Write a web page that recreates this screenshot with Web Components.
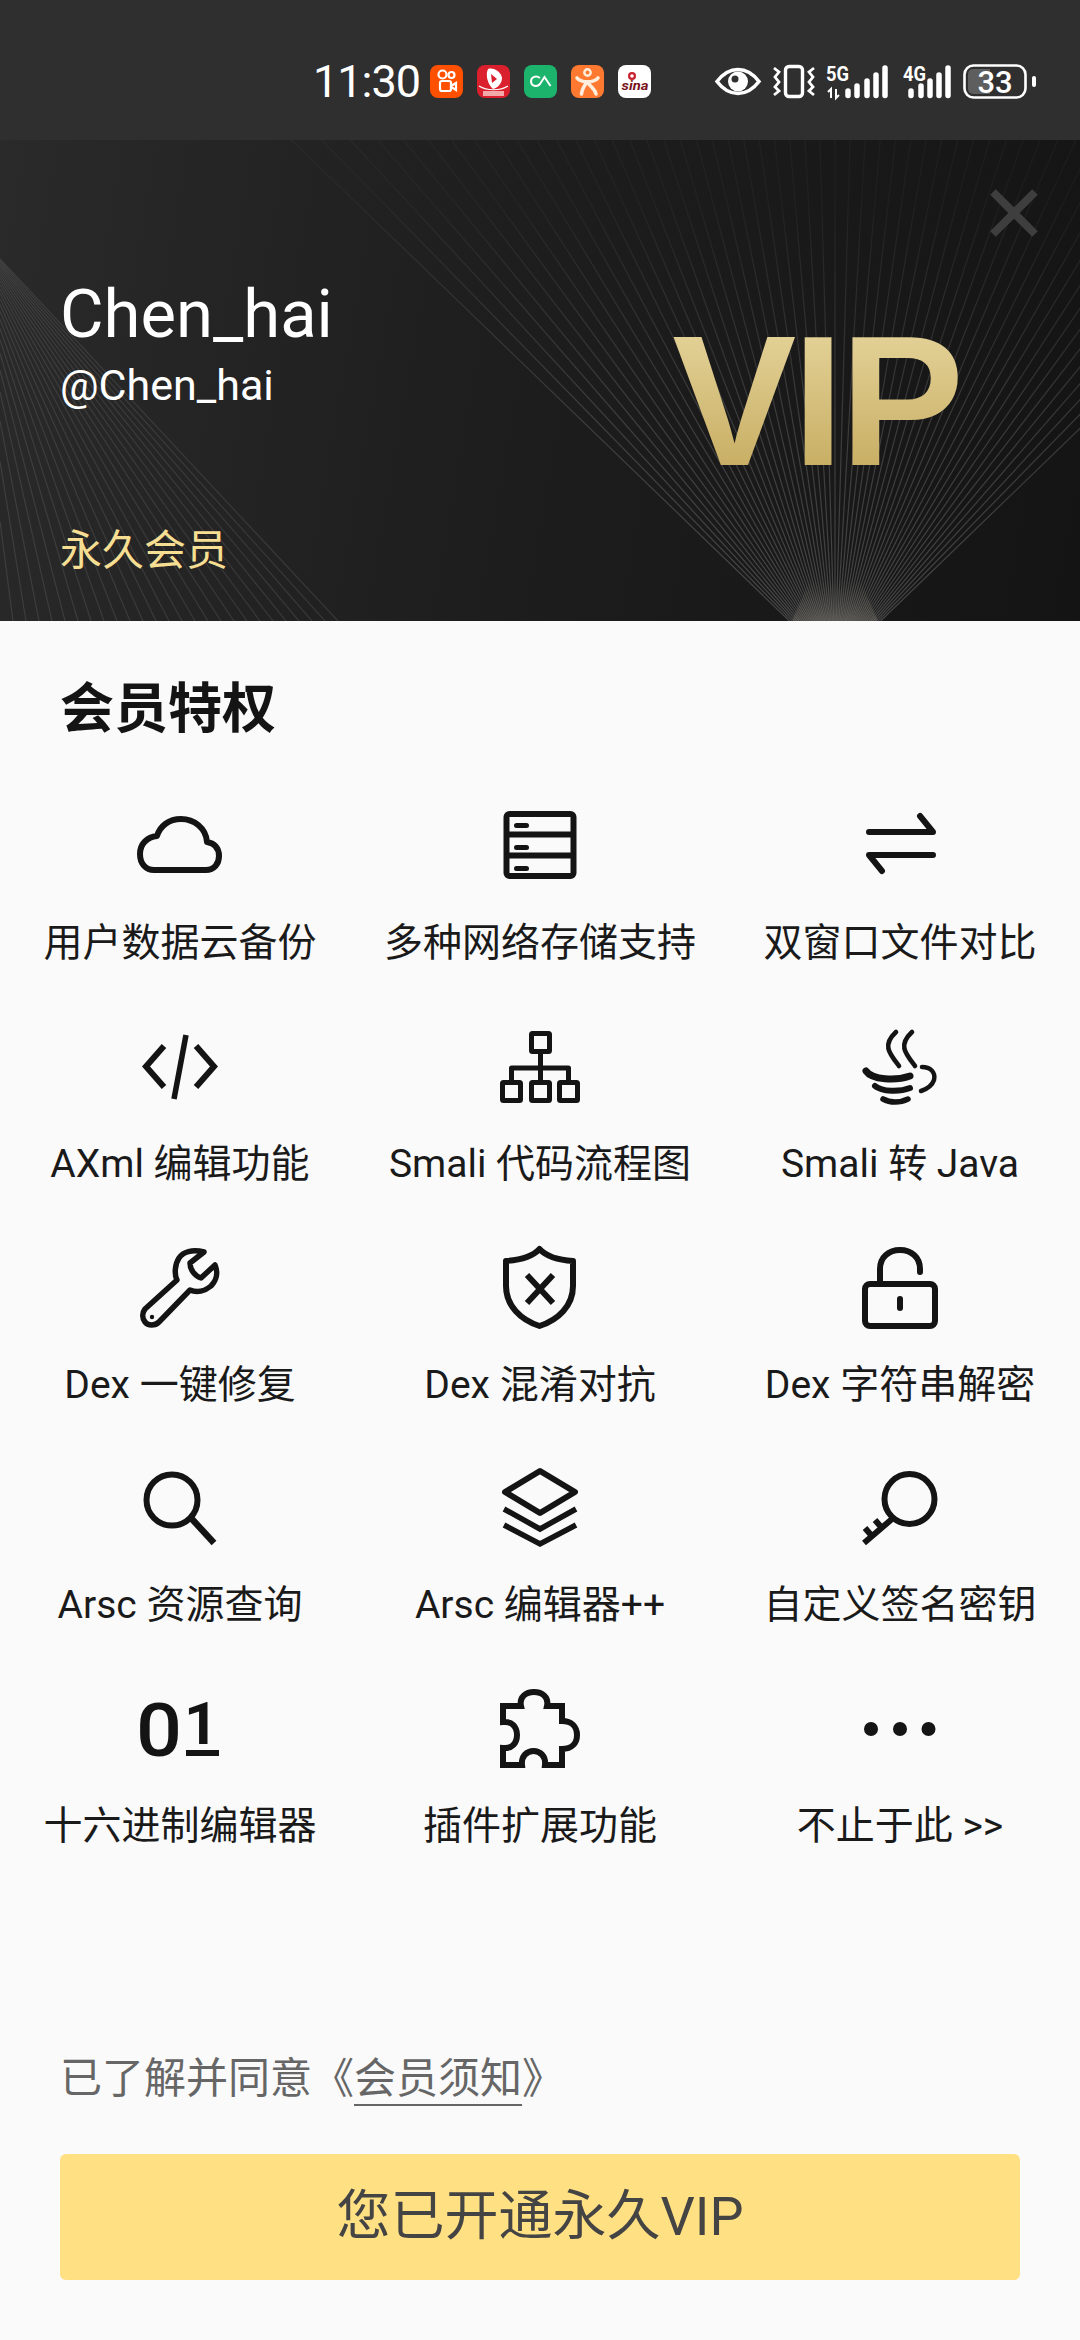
<!DOCTYPE html>
<html lang="zh-CN">
<head>
<meta charset="utf-8">
<title>VIP</title>
<style>
  html, body { margin: 0; padding: 0; background: #fafafa; }
  body { width: 1080px; height: 2340px; overflow: hidden; display: flex; flex-direction: column;
         font-family: Roboto, "Noto Sans CJK SC", sans-serif; }
  vip-sheet { flex: 1; }
  feature-item svg { width: 80px; height: 80px; overflow: visible; display: block; fill: none; stroke: #141414; stroke-width: 6; stroke-linejoin: round; }
  status-bar svg { display: block; overflow: visible; }
  status-bar text { font-family: Roboto, "Liberation Sans", sans-serif; }
</style>
</head>
<body>
<status-bar>
  <svg slot="apps" width="33" height="33" viewBox="0 0 33 33"><rect width="33" height="33" rx="8" fill="#ff5000"/><g fill="none" stroke="#fff" stroke-width="2.2"><circle cx="12.5" cy="9.5" r="4"/><circle cx="21.5" cy="10" r="3"/><rect x="10" y="16" width="11" height="10" rx="2"/><path d="M21 21l5-3v7l-5-3z"/></g></svg>
  <svg slot="apps" width="33" height="33" viewBox="0 0 33 33"><rect width="33" height="33" rx="8" fill="#d9202c"/><path d="M11 4c6-2 13 3 14 9 0 6-5 10-9 11C11 20 8 10 11 4z" fill="#fff"/><path d="M14 9l6 5-5 4z" fill="#d9202c"/><path d="M2 21c8 5 21 5 29 0" fill="none" stroke="#fff" stroke-width="1.2"/><rect x="6" y="26" width="21" height="5" fill="#f4a9a9"/></svg>
  <svg slot="apps" width="33" height="33" viewBox="0 0 33 33"><rect width="33" height="33" rx="8" fill="#1cb36c"/><path d="M16 13c-4-3-9-1-9 3.500s6 6 9 2.500l4.500-7 6 9" fill="none" stroke="#fff" stroke-width="2"/></svg>
  <svg slot="apps" width="33" height="33" viewBox="0 0 33 33"><rect width="33" height="33" rx="8" fill="#ff7a30"/><g fill="none" stroke="#ffeedd" stroke-width="3.600" stroke-linecap="round"><circle cx="16.500" cy="7.500" r="3.200" stroke-width="2.400"/><path d="M6 13c4 5 17 5 21 0"/><path d="M16 17c-3 4-5 8-5.500 12"/><path d="M17 18c3 4 7 6 8 11"/></g></svg>
  <svg slot="apps" width="33" height="33" viewBox="0 0 33 33"><rect width="33" height="33" rx="8" fill="#fff"/><circle cx="14" cy="11" r="4" fill="#c8202c"/><circle cx="14" cy="11" r="1.800" fill="#fff"/><text x="3.500" y="25" font-size="13" font-weight="700" font-style="italic" fill="#7a1420" textLength="27" lengthAdjust="spacingAndGlyphs">sina</text></svg>

  <svg slot="system" style="margin-right:1px" width="46" height="27" viewBox="0 0 46 27"><path d="M2 13.500C10 3 19 1.500 23 1.500S36 3 44 13.500C36 24 27 25.500 23 25.500S10 24 2 13.500z" fill="none" stroke="#fff" stroke-width="3.600"/><circle cx="23" cy="13.500" r="10" fill="#fff"/><circle cx="20" cy="11" r="3.500" fill="#2f2f2f"/></svg>
  <svg slot="system" width="42" height="33" viewBox="0 0 42 33"><rect x="12.500" y="1.500" width="17" height="30" rx="3.500" fill="none" stroke="#fff" stroke-width="3.400"/><path d="M1 3l5 4-4 5 4 5-4 5 4 4-5 4M41 3l-5 4 4 5-4 5 4 5-4 4 5 4" fill="none" stroke="#fff" stroke-width="2.800"/></svg>
  <svg slot="system" width="64" height="35" viewBox="0 0 64 35"><text x="0" y="17" font-size="20" font-weight="700" fill="#fff" textLength="23" lengthAdjust="spacingAndGlyphs">5G</text><path d="M5 34V25l-3 3M10 25v9l3-3" fill="none" stroke="#fff" stroke-width="2"/><g stroke="#fff" stroke-width="5.500" stroke-linecap="round"><path d="M22 27v4.500M31 22v9.500M41 17v14.500M50 11v20.500M59 4v27.500"/></g></svg>
  <svg slot="system" width="51" height="35" viewBox="0 0 51 35"><text x="2" y="17" font-size="20" font-weight="700" fill="#fff" textLength="23" lengthAdjust="spacingAndGlyphs">4G</text><g stroke="#fff" stroke-width="5.500" stroke-linecap="round"><path d="M10 27v4.500M20 22v9.500M29 17v14.500M38 11v20.500M47 4v27.500"/></g></svg>
  <svg slot="system" width="73" height="35" viewBox="0 0 73 35"><rect x="1.500" y="1.500" width="61" height="32" rx="9" fill="none" stroke="#fff" stroke-width="2.600"/><path d="M10 5H27V30H10a5 5 0 0 1-5-5V10a5 5 0 0 1 5-5z" fill="#5e5e5e"/><text x="32" y="28.500" text-anchor="middle" font-size="31" font-weight="500" fill="#fff">33</text><rect x="69" y="12" width="4" height="11" rx="2" fill="#fff"/></svg>
</status-bar>

<vip-hero name="Chen_hai" handle="@Chen_hai" tier="永久会员"></vip-hero>

<vip-sheet>
  <span slot="title">会员特权</span>

  <feature-item><svg slot="icon" viewBox="0 0 80 80"><path d="M14 64H66C74 64 79 58 79 50C79 42 74 37 67 36C66 22 54 13 41 13C29 13 20 20 17 30C7 31 0 38 0 48C0 58 6 64 14 64Z"/></svg>用户数据云备份</feature-item>
  <feature-item><svg slot="icon" viewBox="0 0 80 80"><rect x="6.500" y="8" width="67" height="62" rx="3"/><path d="M6.500 28.500H73.500M6.500 49.500H73.500" /><path d="M16.500 19.500H26.500M16.500 41.500H26.500M16.500 62.500H26.500" stroke-linecap="round" stroke-width="5"/></svg>多种网络存储支持</feature-item>
  <feature-item><svg slot="icon" viewBox="0 0 80 80"><path d="M9 26H73L60 10M73 49H9L22 65" stroke-linecap="round"/></svg>双窗口文件对比</feature-item>

  <feature-item><svg slot="icon" viewBox="0 0 80 80"><path d="M24 19L6 39.500L24 60M56 19L74 39.500L56 60" stroke-linejoin="miter"/><path d="M46 8L34 72" stroke-width="5.500"/></svg>AXml 编辑功能</feature-item>
  <feature-item><svg slot="icon" viewBox="0 0 80 80"><g stroke-width="5"><rect x="31.500" y="6.500" width="18" height="18" rx="1"/><rect x="2.500" y="55.500" width="18" height="18" rx="1"/><rect x="31.500" y="55.500" width="18" height="18" rx="1"/><rect x="59.500" y="55.500" width="18" height="18" rx="1"/><path d="M40.500 25V55M11.500 55V41H68.500V55"/></g></svg>Smali 代码流程图</feature-item>
  <feature-item><svg slot="icon" viewBox="0 0 80 80"><path d="M36 5C22 18 29 26 39 39M52 5C38 18 45 26 55 39" stroke-width="4.600" stroke-linecap="round"/><path d="M6 44C12 53 36 54 50 49" stroke-linecap="round" stroke-width="7"/><path d="M15 59C22 65 40 65 50 61" stroke-linecap="round" stroke-width="6"/><path d="M23 72C30 76 40 76 48 72" stroke-linecap="round" stroke-width="5.500"/><path d="M62 40C70 40 76 45 74 53C72 59 67 62 61 64" stroke-width="4.500" stroke-linecap="round"/></svg>Smali 转 Java</feature-item>

  <feature-item><svg slot="icon" viewBox="0 0 80 80"><path d="M5 61L37 32C34 26 35 16 39 10C43 4 52 1 64 4L50 15C50 22 55 28 61 30L75 17C78 24 77 32 71 38C65 43 57 45 50 42L19 74C15 78 8 78 5 74C2 70 2 65 5 61Z" stroke-width="5.500"/><circle cx="12" cy="69" r="2.200" fill="#141414" stroke="none"/></svg>Dex 一键修复</feature-item>
  <feature-item><svg slot="icon" viewBox="0 0 80 80"><path d="M39.500 1C46 8 56 12 73 13V38C73 58 58 72 39.500 78C21 72 6 58 6 38V13C23 12 33 8 39.500 1Z"/><path d="M27 27L53 55M53 27L27 55" stroke-linejoin="miter"/></svg>Dex 混淆对抗</feature-item>
  <feature-item><svg slot="icon" viewBox="0 0 80 80"><rect x="5" y="36" width="70" height="42" rx="5"/><path d="M20 34V21C20 9 29 2 40 2C51 2 60 9 60 21V24" stroke-linecap="round"/><rect x="37" y="48" width="6" height="15" rx="3" fill="#141414" stroke="none"/></svg>Dex 字符串解密</feature-item>

  <feature-item><svg slot="icon" viewBox="0 0 80 80"><circle cx="32" cy="32" r="25.500"/><path d="M51 50L74 75" stroke-width="6.500"/></svg>Arsc 资源查询</feature-item>
  <feature-item><svg slot="icon" viewBox="0 0 80 80"><path d="M40 3L75 24L40 45L5 24Z"/><path d="M4 41L40 61L76 41M4 57L40 76L76 57" stroke-linejoin="miter" stroke-width="5.500"/></svg>Arsc 编辑器++</feature-item>
  <feature-item><svg slot="icon" viewBox="0 0 80 80"><circle cx="49.500" cy="31" r="25"/><path d="M32 51L4 75M11 67L5 60M21 59L15 52" stroke-linejoin="miter"/></svg>自定义签名密钥</feature-item>

  <feature-item><svg slot="icon" viewBox="0 0 80 80"><text x="-4" y="67" font-family="Roboto, sans-serif" font-size="74" font-weight="500" fill="#141414" stroke="none" textLength="46" lengthAdjust="spacingAndGlyphs">0</text><text x="44" y="55" font-family="Roboto, sans-serif" font-size="60" font-weight="700" fill="#141414" stroke="none">1</text><rect x="46" y="61" width="33" height="6" fill="#141414" stroke="none"/></svg>十六进制编辑器</feature-item>
  <feature-item><svg slot="icon" viewBox="0 0 80 80"><path d="M3 17H21C19 8 26 3 34 3C42 3 49 8 47 17H62V32C72 32 77 38 77 46C77 54 72 60 62 60V76H45C46 67 40 62 33.500 62C27 62 21 67 22 76H3V59C12 60 17 54 17 46C17 38 12 32 3 33Z" stroke-linejoin="miter"/></svg>插件扩展功能</feature-item>
  <feature-item><svg slot="icon" viewBox="0 0 80 80"><g fill="#141414" stroke="none"><circle cx="11" cy="40" r="7"/><circle cx="40" cy="40" r="7"/><circle cx="68.500" cy="40" r="7"/></g></svg>不止于此 &gt;&gt;</feature-item>

  <consent-line slot="footer" before="已了解并同意《" link="会员须知" after="》"></consent-line>
  <action-button slot="footer">您已开通永久VIP</action-button>
</vip-sheet>

<script>
function shadow(el, html) { el.attachShadow({ mode: 'open' }).innerHTML = html; }

customElements.define('status-bar', class extends HTMLElement {
  constructor() {
    super();
    shadow(this, `<style>
      :host { display: flex; box-sizing: border-box; height: 140px; padding: 22px 44px 0 313px; align-items: center; background: #2f2f2f; color: #fff; }
      .time { font: 400 45px/1 Roboto, sans-serif; letter-spacing: -1px; width: 105px; white-space: nowrap; }
      .apps { display: flex; gap: 14px; margin-left: 12px; }
      .sys { display: flex; gap: 11px; margin-left: auto; align-items: center; }
    </style>
    <span class="time">11:30</span>
    <div class="apps"><slot name="apps"></slot></div>
    <div class="sys"><slot name="system"></slot></div>`);
  }
});

customElements.define('vip-hero', class extends HTMLElement {
  constructor() {
    super();
    shadow(this, `<style>
      :host { display: flex; position: relative; box-sizing: border-box; height: 481px; padding-left: 60px; justify-content: space-between; overflow: hidden;
        background: linear-gradient(100deg, #2a2a2a 0%, #1e1e1e 45%, #141414 100%); color: #fff; font-family: Roboto, "Noto Sans CJK SC", sans-serif; }
      svg.bg { position: absolute; left: 0; top: 0; width: 1080px; height: 481px; }
      .col { position: relative; display: flex; flex-direction: column; padding-top: 134px; }
      .name { font-size: 67px; line-height: 80px; }
      .handle { font-size: 43px; line-height: 50px; margin-top: 6px; }
      .tier { font-size: 42px; line-height: 60px; margin-top: 111px; color: #f6de92; }
      .vip { position: relative; align-self: flex-start; margin: 161px 120px 0 0; font: 700 186px/200px "Liberation Sans", sans-serif; letter-spacing: -4px;
        background: linear-gradient(180deg, #e9d9a2 0%, #c2a658 100%); -webkit-background-clip: text; background-clip: text; color: transparent; }
      .close { position: absolute; left: 990px; top: 49px; width: 48px; height: 48px; }
    </style>
    <svg class="bg" viewBox="0 0 1080 481" id="bg"></svg>
    <div class="col">
      <div class="name"></div><div class="handle"></div><div class="tier"></div>
    </div>
    <div class="vip">VIP</div>
    <svg class="close" viewBox="0 0 48 48"><path d="M3 3L45 45M45 3L3 45" stroke="#3e3e3e" stroke-width="8"/></svg>`);
    const r = this.shadowRoot;
    r.querySelector('.name').textContent = this.getAttribute('name');
    r.querySelector('.handle').textContent = this.getAttribute('handle');
    r.querySelector('.tier').textContent = this.getAttribute('tier');
    let s = `<defs>
      <linearGradient id="g" gradientUnits="userSpaceOnUse" x1="0" y1="60" x2="0" y2="481"><stop offset="0" stop-color="#fff" stop-opacity=".03"/><stop offset=".5" stop-color="#fff" stop-opacity=".15"/><stop offset="1" stop-color="#fff" stop-opacity=".2"/></linearGradient>
      <linearGradient id="h" gradientUnits="userSpaceOnUse" x1="0" y1="440" x2="0" y2="481"><stop offset="0" stop-color="#e8e0c0" stop-opacity="0"/><stop offset="1" stop-color="#e8e0c0" stop-opacity=".15"/></linearGradient></defs>`;
    const ax = 835, ay = 525;
    for (let i = 0; i <= 56; i++) {
      const t = -46 + i * (92 / 56);
      const a = t * Math.PI / 180;
      const len = 760;
      s += `<line x1="${ax + 44 * Math.tan(a)}" y1="481" x2="${ax + len * Math.sin(a)}" y2="${ay - len * Math.cos(a)}" stroke="url(#g)" stroke-width="1.200"/>`;
    }
    for (let x = -260; x <= 344; x += 13) {
      const ox = -40, oy = 76, k = (118 - oy + 0.0) ;
      const sx = 0, sy = oy + (481 - oy) * (sx - ox) / (x - ox);
      if (x > 0 && sy >= 0) {
        s += `<line x1="0" y1="${sy}" x2="${x}" y2="481" stroke="#fff" stroke-opacity=".1" stroke-width="1.200"/>`;
      }
    }
    s += `<polygon points="792,481 878,481 860,440 810,440" fill="url(#h)"/>`;
    r.getElementById('bg').innerHTML = s;
  }
});

customElements.define('vip-sheet', class extends HTMLElement {
  constructor() {
    super();
    shadow(this, `<style>
      :host { display: flex; flex-direction: column; background: #fafafa; }
      h2 { margin: 54px 0 61px 60px; font: 700 54px/70px Roboto, "Noto Sans CJK SC", sans-serif; color: #141414; }
      .grid { display: grid; grid-template-columns: repeat(3, 360px); grid-auto-rows: 220.75px; }
      footer { margin-top: auto; padding: 0 60px 60px; display: flex; flex-direction: column; gap: 49px; }
    </style>
    <h2><slot name="title"></slot></h2>
    <div class="grid"><slot></slot></div>
    <footer><slot name="footer"></slot></footer>`);
  }
});

customElements.define('feature-item', class extends HTMLElement {
  constructor() {
    super();
    shadow(this, `<style>
      :host { display: flex; flex-direction: column; align-items: center; color: #1a1a1a; }
      .label { margin-top: 30px; font: 400 39px/54px Roboto, "Noto Sans CJK SC", sans-serif; white-space: nowrap; }
    </style>
    <slot name="icon"></slot>
    <div class="label"><slot></slot></div>`);
  }
});

customElements.define('consent-line', class extends HTMLElement {
  constructor() {
    super();
    shadow(this, `<style>
      :host { display: block; font: 400 42px/60px "Noto Sans CJK SC", sans-serif; color: #666; white-space: nowrap; }
      a { color: inherit; text-decoration: underline; text-decoration-thickness: 2px; text-underline-offset: 11px; }
    </style><span class="b"></span><a></a><span class="c"></span>`);
    const r = this.shadowRoot;
    r.querySelector('.b').textContent = this.getAttribute('before');
    r.querySelector('a').textContent = this.getAttribute('link');
    r.querySelector('.c').textContent = this.getAttribute('after');
  }
});

customElements.define('action-button', class extends HTMLElement {
  constructor() {
    super();
    shadow(this, `<style>
      :host { display: flex; height: 126px; align-items: center; justify-content: center; background: #ffe082; border-radius: 6px; color: #444; font: 400 54px/1 Roboto, "Noto Sans CJK SC", sans-serif; }
    </style><slot></slot>`);
  }
});
</script>
</body>
</html>
